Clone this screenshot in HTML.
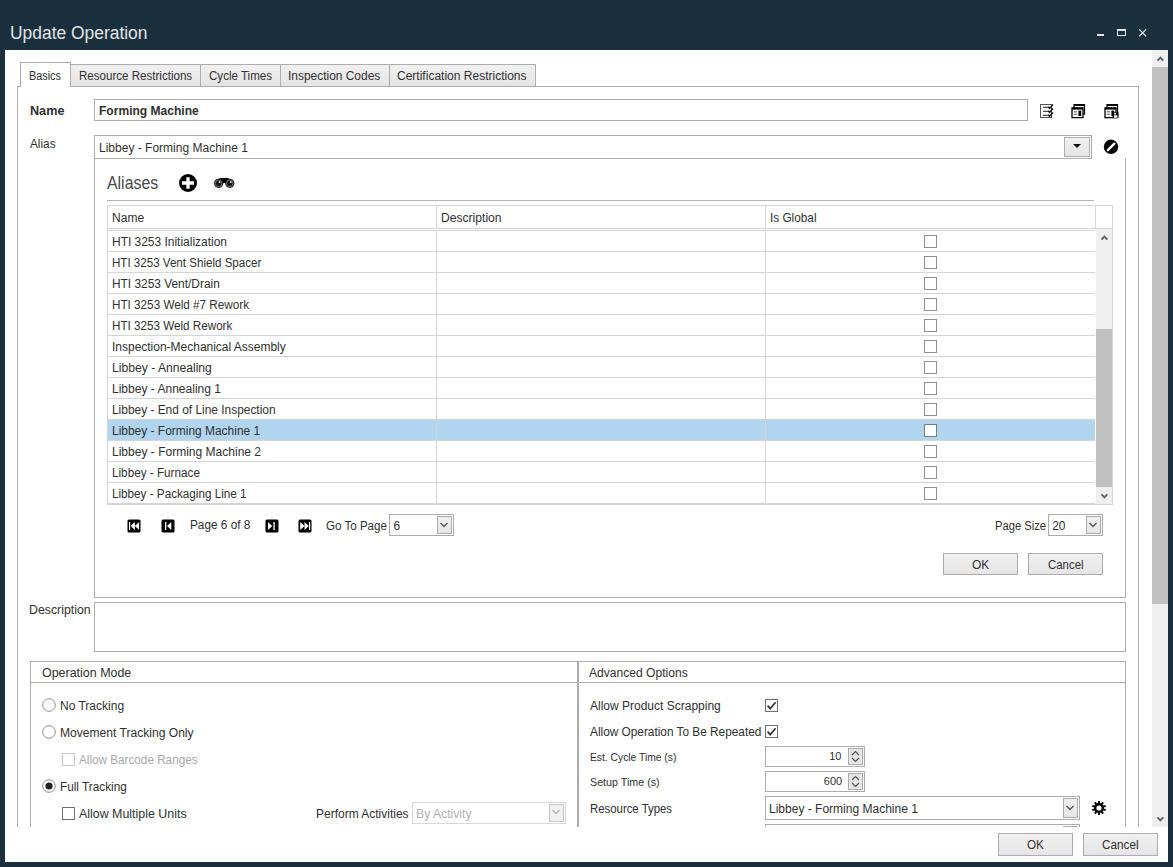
<!DOCTYPE html>
<html><head><meta charset="utf-8"><style>
html,body{margin:0;padding:0;}
body{width:1173px;height:867px;overflow:hidden;background:#1a303e;position:relative;font-family:"Liberation Sans",sans-serif;}
div{position:absolute;box-sizing:border-box;}
.t{white-space:pre;}
svg{display:block;}
</style></head><body>
<div class="t" style="left:9.7px;top:23.76px;font-size:18px;line-height:18px;color:#e2e5e8;font-weight:400;transform:scaleX(0.9676);transform-origin:0 0;">Update Operation</div>
<div style="left:1097px;top:34px;width:7px;height:2px;background:#e6e6e6;"></div>
<div style="left:1117px;top:29px;width:9px;height:7px;border:1px solid #e6e6e6;background:transparent;border-top-width:2px;"></div>
<svg style="position:absolute;left:1138px;top:28px" width="10" height="10" viewBox="0 0 10 10"><path d="M1.2 1.4L8.1 8.3M8.1 1.4L1.2 8.3" stroke="#e0e0e0" stroke-width="1.25"/></svg>
<div style="left:5px;top:50px;width:1163px;height:812px;background:#ffffff;"></div>
<div style="left:5px;top:50px;width:1147px;height:777px;overflow:hidden;">
<div style="left:-5px;top:-50px;width:1152px;height:827px;">
<div style="left:17px;top:86px;width:1122px;height:815px;border:1px solid #acacac;background:transparent;"></div>
<div style="left:70px;top:64px;width:131px;height:23px;border:1px solid #acacac;background:linear-gradient(#f0f0f0,#e5e5e5);"></div>
<div class="t" style="left:78.60000000000001px;top:69.84px;font-size:12px;line-height:12px;color:#303030;font-weight:400;transform:scaleX(0.9638);transform-origin:0 0;">Resource Restrictions</div>
<div style="left:200px;top:64px;width:81px;height:23px;border:1px solid #acacac;background:linear-gradient(#f0f0f0,#e5e5e5);"></div>
<div class="t" style="left:208.5px;top:69.84px;font-size:12px;line-height:12px;color:#303030;font-weight:400;transform:scaleX(0.9645);transform-origin:0 0;">Cycle Times</div>
<div style="left:280px;top:64px;width:110px;height:23px;border:1px solid #acacac;background:linear-gradient(#f0f0f0,#e5e5e5);"></div>
<div class="t" style="left:288.2px;top:69.84px;font-size:12px;line-height:12px;color:#303030;font-weight:400;transform:scaleX(0.9948);transform-origin:0 0;">Inspection Codes</div>
<div style="left:389px;top:64px;width:147px;height:23px;border:1px solid #acacac;background:linear-gradient(#f0f0f0,#e5e5e5);"></div>
<div class="t" style="left:397.2px;top:69.84px;font-size:12px;line-height:12px;color:#303030;font-weight:400;transform:scaleX(1.0014);transform-origin:0 0;">Certification Restrictions</div>
<div style="left:20px;top:62px;width:51px;height:25px;border:1px solid #acacac;background:#ffffff;border-bottom:none;"></div>
<div style="left:21px;top:86px;width:49px;height:1px;background:#ffffff;"></div>
<div class="t" style="left:29.2px;top:69.84px;font-size:12px;line-height:12px;color:#303030;font-weight:400;transform:scaleX(0.9045);transform-origin:0 0;">Basics</div>
<div class="t" style="left:29.9px;top:104.54px;font-size:12px;line-height:12px;color:#303030;font-weight:700;transform:scaleX(1.0527);transform-origin:0 0;">Name</div>
<div style="left:94px;top:99px;width:934px;height:22px;border:1px solid #acacac;background:transparent;"></div>
<div class="t" style="left:98.9px;top:104.84px;font-size:12px;line-height:12px;color:#303030;font-weight:700;transform:scaleX(1.0042);transform-origin:0 0;">Forming Machine</div>
<svg style="position:absolute;left:1039px;top:103px" width="16" height="16" viewBox="0 0 16 16"><rect x="1.5" y="1.5" width="11" height="13" fill="#fff" stroke="#555" stroke-width="1"/><path d="M4 4.3H9.5M4 8.3H9.5M4 12.3H9.5" stroke="#222" stroke-width="1"/><path d="M9.3 3.8L10.6 5.4L14 1.6M9.3 7.8L10.6 9.4L14 5.6M9.3 11.8L10.6 13.4L14 9.6" stroke="#111" stroke-width="1.5" fill="none"/></svg>
<svg style="position:absolute;left:1071px;top:103px" width="16" height="16" viewBox="0 0 16 16"><rect x="3" y="1.6" width="10.5" height="9.5" fill="#fff" stroke="#000" stroke-width="1.2"/><rect x="3" y="1" width="10.5" height="2" fill="#000"/><rect x="1" y="5" width="11" height="9.6" fill="#fff" stroke="#000" stroke-width="1.3"/><rect x="1" y="4.4" width="11" height="2.2" fill="#000"/><rect x="2.6" y="8.2" width="3.6" height="1.2" fill="#777"/><rect x="2.6" y="10.7" width="3.6" height="1.2" fill="#777"/><rect x="7.4" y="7.6" width="2.8" height="5.4" fill="#000"/></svg>
<svg style="position:absolute;left:1104px;top:103px" width="16" height="16" viewBox="0 0 16 16"><rect x="3" y="1.6" width="10.5" height="9.5" fill="#fff" stroke="#000" stroke-width="1.2"/><rect x="3" y="1" width="10.5" height="2" fill="#000"/><rect x="1" y="5" width="11" height="9.6" fill="#fff" stroke="#000" stroke-width="1.3"/><rect x="1" y="4.4" width="11" height="2.2" fill="#000"/><rect x="2.6" y="8.2" width="3.6" height="1.2" fill="#777"/><rect x="2.6" y="10.7" width="3.6" height="1.2" fill="#777"/><rect x="7.4" y="7.6" width="2.8" height="5.4" fill="#000"/><rect x="8.6" y="9.2" width="6" height="6" fill="#000"/><rect x="10" y="12.3" width="3.4" height="2.4" fill="#fff"/><rect x="10.3" y="9.8" width="1.6" height="1.8" fill="#fff"/></svg>
<div class="t" style="left:29.9px;top:137.84px;font-size:12px;line-height:12px;color:#303030;font-weight:400;transform:scaleX(0.9818);transform-origin:0 0;">Alias</div>
<div style="left:94px;top:135px;width:998px;height:24px;border:1px solid #acacac;background:transparent;"></div>
<div style="left:1064px;top:137px;width:26px;height:20px;border:1px solid #acacac;background:linear-gradient(#f0f0f0,#e5e5e5);"></div>
<svg style="position:absolute;left:1073px;top:144px" width="8" height="5" viewBox="0 0 8 5"><path d="M0 0H8L4 4Z" fill="#111"/></svg>
<div class="t" style="left:98.9px;top:141.84px;font-size:12px;line-height:12px;color:#303030;font-weight:400;transform:scaleX(1.0009);transform-origin:0 0;">Libbey - Forming Machine 1</div>
<svg style="position:absolute;left:1103px;top:139px" width="16" height="16" viewBox="0 0 16 16"><circle cx="8" cy="7.8" r="7.2" fill="#000"/><path d="M4.9 11.1L11.3 4.7" stroke="#fff" stroke-width="2.4" stroke-linecap="round"/></svg>
<div style="left:94px;top:158px;width:1032px;height:440px;border:1px solid #acacac;background:transparent;border-top:none;"></div>
<div style="left:94px;top:158px;width:998px;height:1px;background:#acacac;"></div>
<div class="t" style="left:106.60000000000001px;top:173.76px;font-size:18px;line-height:18px;color:#4a4a4a;font-weight:400;transform:scaleX(0.8818);transform-origin:0 0;">Aliases</div>
<svg style="position:absolute;left:178px;top:173px" width="20" height="20" viewBox="0 0 20 20"><circle cx="10" cy="10" r="9" fill="#000"/><path d="M10 4.2V15.8M4 10H16" stroke="#fff" stroke-width="3.3"/></svg>
<svg style="position:absolute;left:213px;top:176px" width="22" height="13" viewBox="0 0 22 13"><path d="M5 7V4.5Q5 2 8 2H14Q17 2 17 4.5V7Z" fill="#000"/><circle cx="5.6" cy="7.3" r="4.6" fill="#111"/><circle cx="16.8" cy="7.3" r="4.6" fill="#111"/><circle cx="5.6" cy="7.3" r="3.3" fill="none" stroke="#999" stroke-width="0.7"/><circle cx="16.8" cy="7.3" r="3.3" fill="none" stroke="#999" stroke-width="0.7"/><circle cx="6.6" cy="6.2" r="0.9" fill="#eee"/><circle cx="17.8" cy="6.2" r="0.9" fill="#eee"/></svg>
<div style="left:107px;top:200px;width:987px;height:1px;background:#b4b4b4;"></div>
<div style="left:107px;top:205px;width:1006px;height:300px;border:1px solid #d5d5d5;background:transparent;"></div>
<div style="left:108px;top:503px;width:987px;height:1px;background:#d5d5d5;"></div>
<div style="left:108px;top:228px;width:1004px;height:1px;background:#d5d5d5;"></div>
<div style="left:436px;top:206px;width:1px;height:22px;background:#d5d5d5;"></div>
<div style="left:765px;top:206px;width:1px;height:22px;background:#d5d5d5;"></div>
<div style="left:1095px;top:206px;width:1px;height:22px;background:#d5d5d5;"></div>
<div class="t" style="left:112.10000000000001px;top:211.84px;font-size:12px;line-height:12px;color:#303030;font-weight:400;">Name</div>
<div class="t" style="left:441.09999999999997px;top:211.84px;font-size:12px;line-height:12px;color:#303030;font-weight:400;transform:scaleX(1.0090);transform-origin:0 0;">Description</div>
<div class="t" style="left:769.5px;top:211.84px;font-size:12px;line-height:12px;color:#303030;font-weight:400;transform:scaleX(0.9828);transform-origin:0 0;">Is Global</div>
<div style="left:108px;top:230px;width:987px;height:1px;background:#d5d5d5;"></div>
<div style="left:436px;top:230px;width:1px;height:21px;background:#d5d5d5;"></div>
<div style="left:765px;top:230px;width:1px;height:21px;background:#d5d5d5;"></div>
<div class="t" style="left:112.0px;top:235.84px;font-size:12px;line-height:12px;color:#303030;font-weight:400;transform:scaleX(0.9961);transform-origin:0 0;">HTI 3253 Initialization</div>
<div style="left:924px;top:235px;width:13px;height:13px;border:1px solid #8e8f8f;background:#fff;"></div>
<div style="left:108px;top:251px;width:987px;height:1px;background:#d5d5d5;"></div>
<div style="left:436px;top:251px;width:1px;height:21px;background:#d5d5d5;"></div>
<div style="left:765px;top:251px;width:1px;height:21px;background:#d5d5d5;"></div>
<div class="t" style="left:112.0px;top:256.84px;font-size:12px;line-height:12px;color:#303030;font-weight:400;transform:scaleX(0.9649);transform-origin:0 0;">HTI 3253 Vent Shield Spacer</div>
<div style="left:924px;top:256px;width:13px;height:13px;border:1px solid #8e8f8f;background:#fff;"></div>
<div style="left:108px;top:272px;width:987px;height:1px;background:#d5d5d5;"></div>
<div style="left:436px;top:272px;width:1px;height:21px;background:#d5d5d5;"></div>
<div style="left:765px;top:272px;width:1px;height:21px;background:#d5d5d5;"></div>
<div class="t" style="left:112.0px;top:277.84px;font-size:12px;line-height:12px;color:#303030;font-weight:400;transform:scaleX(0.9910);transform-origin:0 0;">HTI 3253 Vent/Drain</div>
<div style="left:924px;top:277px;width:13px;height:13px;border:1px solid #8e8f8f;background:#fff;"></div>
<div style="left:108px;top:293px;width:987px;height:1px;background:#d5d5d5;"></div>
<div style="left:436px;top:293px;width:1px;height:21px;background:#d5d5d5;"></div>
<div style="left:765px;top:293px;width:1px;height:21px;background:#d5d5d5;"></div>
<div class="t" style="left:112.0px;top:298.84px;font-size:12px;line-height:12px;color:#303030;font-weight:400;transform:scaleX(0.9752);transform-origin:0 0;">HTI 3253 Weld #7 Rework</div>
<div style="left:924px;top:298px;width:13px;height:13px;border:1px solid #8e8f8f;background:#fff;"></div>
<div style="left:108px;top:314px;width:987px;height:1px;background:#d5d5d5;"></div>
<div style="left:436px;top:314px;width:1px;height:21px;background:#d5d5d5;"></div>
<div style="left:765px;top:314px;width:1px;height:21px;background:#d5d5d5;"></div>
<div class="t" style="left:112.0px;top:319.84px;font-size:12px;line-height:12px;color:#303030;font-weight:400;transform:scaleX(0.9718);transform-origin:0 0;">HTI 3253 Weld Rework</div>
<div style="left:924px;top:319px;width:13px;height:13px;border:1px solid #8e8f8f;background:#fff;"></div>
<div style="left:108px;top:335px;width:987px;height:1px;background:#d5d5d5;"></div>
<div style="left:436px;top:335px;width:1px;height:21px;background:#d5d5d5;"></div>
<div style="left:765px;top:335px;width:1px;height:21px;background:#d5d5d5;"></div>
<div class="t" style="left:112.0px;top:340.84px;font-size:12px;line-height:12px;color:#303030;font-weight:400;transform:scaleX(0.9981);transform-origin:0 0;">Inspection-Mechanical Assembly</div>
<div style="left:924px;top:340px;width:13px;height:13px;border:1px solid #8e8f8f;background:#fff;"></div>
<div style="left:108px;top:356px;width:987px;height:1px;background:#d5d5d5;"></div>
<div style="left:436px;top:356px;width:1px;height:21px;background:#d5d5d5;"></div>
<div style="left:765px;top:356px;width:1px;height:21px;background:#d5d5d5;"></div>
<div class="t" style="left:112.0px;top:361.84px;font-size:12px;line-height:12px;color:#303030;font-weight:400;transform:scaleX(1.0114);transform-origin:0 0;">Libbey - Annealing</div>
<div style="left:924px;top:361px;width:13px;height:13px;border:1px solid #8e8f8f;background:#fff;"></div>
<div style="left:108px;top:377px;width:987px;height:1px;background:#d5d5d5;"></div>
<div style="left:436px;top:377px;width:1px;height:21px;background:#d5d5d5;"></div>
<div style="left:765px;top:377px;width:1px;height:21px;background:#d5d5d5;"></div>
<div class="t" style="left:112.0px;top:382.84px;font-size:12px;line-height:12px;color:#303030;font-weight:400;transform:scaleX(1.0019);transform-origin:0 0;">Libbey - Annealing 1</div>
<div style="left:924px;top:382px;width:13px;height:13px;border:1px solid #8e8f8f;background:#fff;"></div>
<div style="left:108px;top:398px;width:987px;height:1px;background:#d5d5d5;"></div>
<div style="left:436px;top:398px;width:1px;height:21px;background:#d5d5d5;"></div>
<div style="left:765px;top:398px;width:1px;height:21px;background:#d5d5d5;"></div>
<div class="t" style="left:112.0px;top:403.84px;font-size:12px;line-height:12px;color:#303030;font-weight:400;transform:scaleX(0.9925);transform-origin:0 0;">Libbey - End of Line Inspection</div>
<div style="left:924px;top:403px;width:13px;height:13px;border:1px solid #8e8f8f;background:#fff;"></div>
<div style="left:108px;top:420px;width:987px;height:20px;background:#b1d5ef;"></div>
<div style="left:108px;top:419px;width:987px;height:1px;background:#d5d5d5;"></div>
<div style="left:436px;top:419px;width:1px;height:21px;background:#d5d5d5;"></div>
<div style="left:765px;top:419px;width:1px;height:21px;background:#d5d5d5;"></div>
<div class="t" style="left:112.0px;top:424.84px;font-size:12px;line-height:12px;color:#303030;font-weight:400;transform:scaleX(0.9961);transform-origin:0 0;">Libbey - Forming Machine 1</div>
<div style="left:924px;top:424px;width:13px;height:13px;border:1px solid #6f7f8c;background:#fff;"></div>
<div style="left:108px;top:440px;width:987px;height:1px;background:#d5d5d5;"></div>
<div style="left:436px;top:440px;width:1px;height:21px;background:#d5d5d5;"></div>
<div style="left:765px;top:440px;width:1px;height:21px;background:#d5d5d5;"></div>
<div class="t" style="left:112.0px;top:445.84px;font-size:12px;line-height:12px;color:#303030;font-weight:400;transform:scaleX(1.0022);transform-origin:0 0;">Libbey - Forming Machine 2</div>
<div style="left:924px;top:445px;width:13px;height:13px;border:1px solid #8e8f8f;background:#fff;"></div>
<div style="left:108px;top:461px;width:987px;height:1px;background:#d5d5d5;"></div>
<div style="left:436px;top:461px;width:1px;height:21px;background:#d5d5d5;"></div>
<div style="left:765px;top:461px;width:1px;height:21px;background:#d5d5d5;"></div>
<div class="t" style="left:112.0px;top:466.84px;font-size:12px;line-height:12px;color:#303030;font-weight:400;transform:scaleX(0.9766);transform-origin:0 0;">Libbey - Furnace</div>
<div style="left:924px;top:466px;width:13px;height:13px;border:1px solid #8e8f8f;background:#fff;"></div>
<div style="left:108px;top:482px;width:987px;height:1px;background:#d5d5d5;"></div>
<div style="left:436px;top:482px;width:1px;height:21px;background:#d5d5d5;"></div>
<div style="left:765px;top:482px;width:1px;height:21px;background:#d5d5d5;"></div>
<div class="t" style="left:112.0px;top:487.84px;font-size:12px;line-height:12px;color:#303030;font-weight:400;transform:scaleX(0.9742);transform-origin:0 0;">Libbey - Packaging Line 1</div>
<div style="left:924px;top:487px;width:13px;height:13px;border:1px solid #8e8f8f;background:#fff;"></div>
<div style="left:1096px;top:229px;width:16px;height:275px;background:#efefef;"></div>
<div style="left:1096px;top:329px;width:16px;height:158px;background:#c0c0c0;"></div>
<svg style="position:absolute;left:1098px;top:233px" width="12" height="10" viewBox="0 0 12 10"><path d="M3.5 6.6L6.4 3.6L9.3 6.6" stroke="#606060" stroke-width="1.9" fill="none"/></svg>
<svg style="position:absolute;left:1098px;top:491px" width="12" height="10" viewBox="0 0 12 10"><path d="M3.5 3.4L6.4 6.4L9.3 3.4" stroke="#606060" stroke-width="1.9" fill="none"/></svg>
<svg style="position:absolute;left:127px;top:519px" width="14" height="14" viewBox="0 0 14 14"><rect x="0.5" y="0.5" width="13" height="13" rx="1.5" fill="#000"/><rect x="2" y="3" width="1.2" height="8" fill="#fff"/><path d="M3.6 7L7.9 3V11Z M7.8 7L12.1 3V11Z" fill="#fff"/></svg>
<svg style="position:absolute;left:161px;top:519px" width="14" height="14" viewBox="0 0 14 14"><rect x="0.5" y="0.5" width="13" height="13" rx="1.5" fill="#000"/><rect x="4" y="3" width="1.3" height="8" fill="#fff"/><path d="M6 7L10.3 3V11Z" fill="#fff"/></svg>
<svg style="position:absolute;left:265px;top:519px" width="14" height="14" viewBox="0 0 14 14"><rect x="0.5" y="0.5" width="13" height="13" rx="1.5" fill="#000"/><rect x="8.4" y="3" width="1.3" height="8" fill="#fff"/><path d="M7.2 7L3 3V11Z" fill="#fff"/></svg>
<svg style="position:absolute;left:298px;top:519px" width="14" height="14" viewBox="0 0 14 14"><rect x="0.5" y="0.5" width="13" height="13" rx="1.5" fill="#000"/><rect x="11" y="3" width="1.2" height="8" fill="#fff"/><path d="M10.8 7L6.5 3V11Z M6.5 7L2.2 3V11Z" fill="#fff"/></svg>
<div class="t" style="left:189.79999999999998px;top:518.64px;font-size:12px;line-height:12px;color:#303030;font-weight:400;transform:scaleX(0.9829);transform-origin:0 0;">Page 6 of 8</div>
<div class="t" style="left:325.7px;top:520.34px;font-size:12px;line-height:12px;color:#303030;font-weight:400;transform:scaleX(0.9644);transform-origin:0 0;">Go To Page</div>
<div style="left:389px;top:514px;width:65px;height:22px;border:1px solid #acacac;background:transparent;"></div>
<div style="left:437px;top:516px;width:15px;height:18px;border:1px solid #acacac;background:linear-gradient(#f0f0f0,#e5e5e5);"></div>
<svg style="position:absolute;left:439px;top:521px" width="10" height="8" viewBox="0 0 10 8"><path d="M1.5 2L5 5.5L8.5 2" stroke="#555" stroke-width="1.4" fill="none"/></svg>
<div class="t" style="left:393.5px;top:520.24px;font-size:12px;line-height:12px;color:#303030;font-weight:400;">6</div>
<div class="t" style="left:994.7px;top:520.24px;font-size:12px;line-height:12px;color:#303030;font-weight:400;transform:scaleX(0.9322);transform-origin:0 0;">Page Size</div>
<div style="left:1048px;top:514px;width:55px;height:22px;border:1px solid #acacac;background:transparent;"></div>
<div style="left:1086px;top:516px;width:15px;height:18px;border:1px solid #acacac;background:linear-gradient(#f0f0f0,#e5e5e5);"></div>
<svg style="position:absolute;left:1088px;top:521px" width="10" height="8" viewBox="0 0 10 8"><path d="M1.5 2L5 5.5L8.5 2" stroke="#555" stroke-width="1.4" fill="none"/></svg>
<div class="t" style="left:1052.2px;top:520.24px;font-size:12px;line-height:12px;color:#303030;font-weight:400;">20</div>
<div style="left:943px;top:553px;width:75px;height:22px;border:1px solid #acacac;background:linear-gradient(#f0f0f0,#e5e5e5);"></div>
<div class="t" style="left:971.9000000000001px;top:558.84px;font-size:12px;line-height:12px;color:#303030;font-weight:400;transform:scaleX(0.9949);transform-origin:0 0;">OK</div>
<div style="left:1028px;top:553px;width:75px;height:22px;border:1px solid #acacac;background:linear-gradient(#f0f0f0,#e5e5e5);"></div>
<div class="t" style="left:1047.5px;top:558.84px;font-size:12px;line-height:12px;color:#303030;font-weight:400;transform:scaleX(0.9506);transform-origin:0 0;">Cancel</div>
<div class="t" style="left:29.3px;top:604.44px;font-size:12px;line-height:12px;color:#303030;font-weight:400;transform:scaleX(1.0259);transform-origin:0 0;">Description</div>
<div style="left:94px;top:602px;width:1032px;height:50px;border:1px solid #acacac;background:transparent;"></div>
<div style="left:30px;top:661px;width:548px;height:240px;border:1px solid #acacac;background:transparent;"></div>
<div style="left:31px;top:682px;width:546px;height:1px;background:#acacac;"></div>
<div class="t" style="left:41.5px;top:666.64px;font-size:12px;line-height:12px;color:#303030;font-weight:400;transform:scaleX(1.0376);transform-origin:0 0;">Operation Mode</div>
<svg style="position:absolute;left:42px;top:698px" width="14" height="14" viewBox="0 0 14 14"><circle cx="7" cy="7" r="6.3" fill="#fff" stroke="#8e8e8e" stroke-width="1"/></svg>
<div class="t" style="left:59.5px;top:699.64px;font-size:12px;line-height:12px;color:#303030;font-weight:400;transform:scaleX(1.0005);transform-origin:0 0;">No Tracking</div>
<svg style="position:absolute;left:42px;top:725px" width="14" height="14" viewBox="0 0 14 14"><circle cx="7" cy="7" r="6.3" fill="#fff" stroke="#8e8e8e" stroke-width="1"/></svg>
<div class="t" style="left:59.5px;top:727.04px;font-size:12px;line-height:12px;color:#303030;font-weight:400;transform:scaleX(1.0064);transform-origin:0 0;">Movement Tracking Only</div>
<div style="left:62px;top:753px;width:13px;height:13px;border:1px solid #c8c8c8;background:#fff;"></div>
<div class="t" style="left:78.5px;top:754.14px;font-size:12px;line-height:12px;color:#a8a8a8;font-weight:400;transform:scaleX(0.9764);transform-origin:0 0;">Allow Barcode Ranges</div>
<svg style="position:absolute;left:42px;top:779px" width="14" height="14" viewBox="0 0 14 14"><circle cx="7" cy="7" r="6.3" fill="#fff" stroke="#8e8e8e" stroke-width="1"/><circle cx="7" cy="7" r="3.6" fill="#222"/></svg>
<div class="t" style="left:59.5px;top:780.64px;font-size:12px;line-height:12px;color:#303030;font-weight:400;transform:scaleX(0.9810);transform-origin:0 0;">Full Tracking</div>
<div style="left:62px;top:807px;width:13px;height:13px;border:1px solid #707070;background:#fff;"></div>
<div class="t" style="left:78.7px;top:808.24px;font-size:12px;line-height:12px;color:#303030;font-weight:400;transform:scaleX(1.0341);transform-origin:0 0;">Allow Multiple Units</div>
<div class="t" style="left:316.09999999999997px;top:807.54px;font-size:12px;line-height:12px;color:#303030;font-weight:400;transform:scaleX(0.9984);transform-origin:0 0;">Perform Activities</div>
<div style="left:412px;top:802px;width:154px;height:22px;border:1px solid #d9d9d9;background:transparent;"></div>
<div style="left:549px;top:804px;width:15px;height:18px;border:1px solid #c6c6c6;background:#f0f0f0;"></div>
<svg style="position:absolute;left:551px;top:808px" width="10" height="8" viewBox="0 0 10 8"><path d="M1.5 2L5 5.5L8.5 2" stroke="#b5b5b5" stroke-width="1.4" fill="none"/></svg>
<div class="t" style="left:416.2px;top:808.14px;font-size:12px;line-height:12px;color:#b0b0b0;font-weight:400;transform:scaleX(1.0162);transform-origin:0 0;">By Activity</div>
<div style="left:578px;top:661px;width:548px;height:240px;border:1px solid #acacac;background:transparent;"></div>
<div style="left:579px;top:682px;width:546px;height:1px;background:#acacac;"></div>
<div class="t" style="left:589.4000000000001px;top:667.14px;font-size:12px;line-height:12px;color:#303030;font-weight:400;transform:scaleX(1.0072);transform-origin:0 0;">Advanced Options</div>
<div class="t" style="left:589.7px;top:699.94px;font-size:12px;line-height:12px;color:#303030;font-weight:400;transform:scaleX(1.0002);transform-origin:0 0;">Allow Product Scrapping</div>
<div style="left:765px;top:699px;width:13px;height:13px;border:1px solid #707070;background:#fff;"></div>
<svg style="position:absolute;left:765px;top:699px" width="13" height="13" viewBox="0 0 13 13"><path d="M2.6 6.6L5.2 9.6L10.6 3.2" stroke="#333" stroke-width="1.7" fill="none"/></svg>
<div class="t" style="left:589.7px;top:725.54px;font-size:12px;line-height:12px;color:#303030;font-weight:400;transform:scaleX(0.9854);transform-origin:0 0;">Allow Operation To Be Repeated</div>
<div style="left:765px;top:725px;width:13px;height:13px;border:1px solid #707070;background:#fff;"></div>
<svg style="position:absolute;left:765px;top:725px" width="13" height="13" viewBox="0 0 13 13"><path d="M2.6 6.6L5.2 9.6L10.6 3.2" stroke="#333" stroke-width="1.7" fill="none"/></svg>
<div class="t" style="left:589.7px;top:751.99px;font-size:11px;line-height:11px;color:#303030;font-weight:400;transform:scaleX(0.9353);transform-origin:0 0;">Est. Cycle Time (s)</div>
<div style="left:765px;top:746px;width:100px;height:21px;border:1px solid #acacac;background:transparent;"></div>
<div style="left:848px;top:748px;width:15px;height:17px;border:1px solid #acacac;background:#e6e6e6;"></div>
<svg style="position:absolute;left:849px;top:749px" width="13" height="15" viewBox="0 0 13 15"><path d="M3 6L6.5 2.5L10 6M3 9L6.5 12.5L10 9" stroke="#555" stroke-width="1.2" fill="none"/></svg>
<div class="t" style="left:829.2px;top:751.39px;font-size:11px;line-height:11px;color:#303030;font-weight:400;">10</div>
<div class="t" style="left:589.7px;top:776.99px;font-size:11px;line-height:11px;color:#303030;font-weight:400;transform:scaleX(0.9738);transform-origin:0 0;">Setup Time (s)</div>
<div style="left:765px;top:771px;width:100px;height:21px;border:1px solid #acacac;background:transparent;"></div>
<div style="left:848px;top:773px;width:15px;height:17px;border:1px solid #acacac;background:#e6e6e6;"></div>
<svg style="position:absolute;left:849px;top:774px" width="13" height="15" viewBox="0 0 13 15"><path d="M3 6L6.5 2.5L10 6M3 9L6.5 12.5L10 9" stroke="#555" stroke-width="1.2" fill="none"/></svg>
<div class="t" style="left:823.8000000000001px;top:775.69px;font-size:11px;line-height:11px;color:#303030;font-weight:400;">600</div>
<div class="t" style="left:589.7px;top:802.64px;font-size:12px;line-height:12px;color:#303030;font-weight:400;transform:scaleX(0.9481);transform-origin:0 0;">Resource Types</div>
<div style="left:765px;top:796px;width:315px;height:24px;border:1px solid #acacac;background:transparent;"></div>
<div style="left:1063px;top:798px;width:15px;height:20px;border:1px solid #acacac;background:linear-gradient(#f0f0f0,#e5e5e5);"></div>
<svg style="position:absolute;left:1065px;top:804px" width="10" height="8" viewBox="0 0 10 8"><path d="M1.5 2L5 5.5L8.5 2" stroke="#555" stroke-width="1.4" fill="none"/></svg>
<div class="t" style="left:769.2px;top:802.64px;font-size:12px;line-height:12px;color:#303030;font-weight:400;transform:scaleX(1.0009);transform-origin:0 0;">Libbey - Forming Machine 1</div>
<svg style="position:absolute;left:1091px;top:800px" width="16" height="16" viewBox="0 0 16 16"><path d="M9.00 4.10 L9.00 1.00 L7.00 1.00 L7.00 4.10ZM11.10 5.43 L12.92 2.92 L11.31 1.75 L9.48 4.26ZM12.02 7.75 L14.97 6.79 L14.35 4.89 L11.40 5.84ZM11.40 10.16 L14.35 11.11 L14.97 9.21 L12.02 8.25ZM9.48 11.74 L11.31 14.25 L12.92 13.08 L11.10 10.57ZM7.00 11.90 L7.00 15.00 L9.00 15.00 L9.00 11.90ZM4.90 10.57 L3.08 13.08 L4.69 14.25 L6.52 11.74ZM3.98 8.25 L1.03 9.21 L1.65 11.11 L4.60 10.16ZM4.60 5.84 L1.65 4.89 L1.03 6.79 L3.98 7.75ZM6.52 4.26 L4.69 1.75 L3.08 2.92 L4.90 5.43Z" fill="#000"/><circle cx="8" cy="8" r="4.9" fill="#000"/><circle cx="8" cy="8" r="2.6" fill="#fff"/></svg>
<div style="left:765px;top:824px;width:315px;height:37px;border:1px solid #acacac;background:transparent;"></div>
<div style="left:1063px;top:826px;width:15px;height:33px;border:1px solid #acacac;background:linear-gradient(#f0f0f0,#e5e5e5);"></div>
</div></div>
<div style="left:1152px;top:50px;width:16px;height:777px;background:#efefef;"></div>
<div style="left:1152px;top:67px;width:16px;height:537px;background:#c0c0c0;"></div>
<svg style="position:absolute;left:1154px;top:54px" width="12" height="10" viewBox="0 0 12 10"><path d="M3.5 6.6L6.4 3.6L9.3 6.6" stroke="#606060" stroke-width="1.9" fill="none"/></svg>
<svg style="position:absolute;left:1154px;top:814px" width="12" height="10" viewBox="0 0 12 10"><path d="M3.5 3.4L6.4 6.4L9.3 3.4" stroke="#606060" stroke-width="1.9" fill="none"/></svg>
<div style="left:998px;top:833px;width:75px;height:23px;border:1px solid #acacac;background:linear-gradient(#f0f0f0,#e5e5e5);"></div>
<div class="t" style="left:1026.9px;top:838.84px;font-size:12px;line-height:12px;color:#303030;font-weight:400;transform:scaleX(0.9705);transform-origin:0 0;">OK</div>
<div style="left:1083px;top:833px;width:75px;height:23px;border:1px solid #acacac;background:linear-gradient(#f0f0f0,#e5e5e5);"></div>
<div class="t" style="left:1102.2px;top:838.84px;font-size:12px;line-height:12px;color:#303030;font-weight:400;transform:scaleX(0.9780);transform-origin:0 0;">Cancel</div>
</body></html>
